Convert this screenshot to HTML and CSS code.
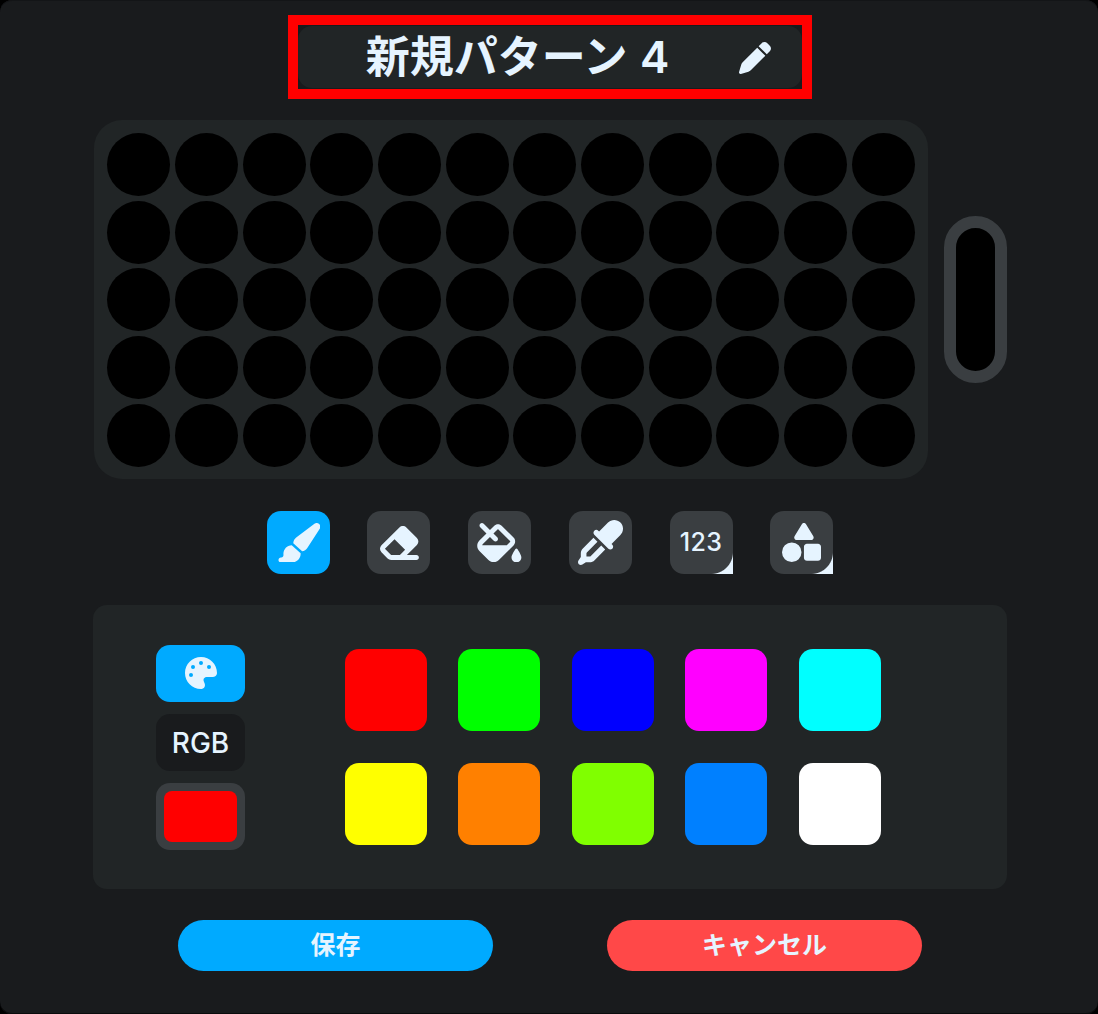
FILE: index.html
```html
<!DOCTYPE html>
<html lang="ja">
<head>
<meta charset="utf-8">
<title>新規パターン 4</title>
<link rel="stylesheet" href="styles.css">
</head>
<body>
<div class="window">
  <div class="title">
    <span class="title-text">新規パターン 4</span>
    <svg class="title-pen" viewBox="0 0 512 512"><path d="M362.7 19.3L314.3 67.7 444.3 197.7l48.4-48.4c25-25 25-65.5 0-90.5L453.3 19.3c-25-25-65.5-25-90.5 0zm-71 71L58.6 323.5c-10.4 10.4-18 23.3-22.2 37.4L1 481.2C-1.5 489.7 .8 498.8 7 505s15.3 8.5 23.7 6.1l120.3-35.4c14.1-4.2 27-11.8 37.4-22.2L421.7 220.3 291.7 90.3z"/></svg>
    <div class="highlight"></div>
  </div>

  <div class="board-row">
    <div class="board">
      <div class="led"></div><div class="led"></div><div class="led"></div><div class="led"></div><div class="led"></div><div class="led"></div><div class="led"></div><div class="led"></div><div class="led"></div><div class="led"></div><div class="led"></div><div class="led"></div>
      <div class="led"></div><div class="led"></div><div class="led"></div><div class="led"></div><div class="led"></div><div class="led"></div><div class="led"></div><div class="led"></div><div class="led"></div><div class="led"></div><div class="led"></div><div class="led"></div>
      <div class="led"></div><div class="led"></div><div class="led"></div><div class="led"></div><div class="led"></div><div class="led"></div><div class="led"></div><div class="led"></div><div class="led"></div><div class="led"></div><div class="led"></div><div class="led"></div>
      <div class="led"></div><div class="led"></div><div class="led"></div><div class="led"></div><div class="led"></div><div class="led"></div><div class="led"></div><div class="led"></div><div class="led"></div><div class="led"></div><div class="led"></div><div class="led"></div>
      <div class="led"></div><div class="led"></div><div class="led"></div><div class="led"></div><div class="led"></div><div class="led"></div><div class="led"></div><div class="led"></div><div class="led"></div><div class="led"></div><div class="led"></div><div class="led"></div>
    </div>
    <div class="side-pill"></div>
  </div>

  <div class="tools">
    <div class="tool tool-active"><svg class="icon" viewBox="0 0 576 512"><path d="M339.3 367.1c27.3-3.9 51.9-19.4 67.2-42.9L568.2 74.1c12.6-19.5 9.4-45.3-7.6-61.2S517.7-4.4 499.1 9.6L262.4 187.2c-24 18-38.2 46.1-38.4 76.1L339.3 367.1zm-19.6 25.4l-116-104.4C143.9 290.3 96 339.6 96 400c0 3.9 .2 7.8 .6 11.6C98.4 429.1 86.4 448 68.8 448H64c-17.7 0-32 14.3-32 32s14.3 32 32 32H208c61.9 0 112-50.1 112-112c0-2.5-.1-5-.2-7.5z"/></svg></div>
    <div class="tool"><svg class="icon" viewBox="0 0 576 512"><path d="M290.7 57.4L57.4 290.7c-25 25-25 65.5 0 90.5l80 80c12 12 28.3 18.7 45.3 18.7H288h9.4H512c17.7 0 32-14.3 32-32s-14.3-32-32-32H387.9L518.6 285.3c25-25 25-65.5 0-90.5L381.3 57.4c-25-25-65.5-25-90.5 0zM297.4 416H288l-105.4 0-80-80L227.3 211.3 364.7 348.7 297.4 416z"/></svg></div>
    <div class="tool"><svg class="icon" viewBox="0 0 576 512"><path d="M41.4 9.4C53.9-3.1 74.1-3.1 86.6 9.4L168 90.7l53.1-53.1c28.1-28.1 73.7-28.1 101.8 0L474.3 189.1c28.1 28.1 28.1 73.7 0 101.8L283.9 481.4c-37.5 37.5-98.3 37.5-135.8 0L30.6 363.9c-37.5-37.5-37.5-98.3 0-135.8L122.7 136 41.4 54.6c-12.5-12.5-12.5-32.8 0-45.3zm176 221.3L168 181.3 75.9 273.4c-4.2 4.2-7 9.3-8.4 14.6H386.7l42.3-42.3c3.1-3.1 3.1-8.2 0-11.3L277.7 82.9c-3.1-3.1-8.2-3.1-11.3 0L213.3 136l49.4 49.4c12.5 12.5 12.5 32.8 0 45.3s-32.8 12.5-45.3 0zM512 512c-35.3 0-64-28.7-64-64c0-25.2 32.6-79.6 51.2-108.7c6-9.4 19.5-9.4 25.5 0C543.4 368.4 576 422.8 576 448c0 35.3-28.7 64-64 64z"/></svg></div>
    <div class="tool"><svg class="icon icon-dropper" viewBox="0 0 512 512"><path d="M341.6 29.2L240.1 130.8l-9.4-9.4c-12.5-12.5-32.8-12.5-45.3 0s-12.5 32.8 0 45.3l160 160c12.5 12.5 32.8 12.5 45.3 0s12.5-32.8 0-45.3l-9.4-9.4L482.8 170.4c39-39 39-102.2 0-141.1s-102.2-39-141.1 0zM55.4 323.3c-15 15-23.4 35.4-23.4 56.6v42.4L5.4 462.2c-8.5 12.7-6.8 29.6 4 40.4s27.7 12.5 40.4 4L89.7 480h42.4c21.2 0 41.6-8.4 56.6-23.4L309.4 335.9l-45.3-45.3L143.4 411.3c-3 3-7.1 4.7-11.3 4.7H96V379.9c0-4.2 1.7-8.3 4.7-11.3L221.4 247.9l-45.3-45.3L55.4 323.3z"/></svg></div>
    <div class="tool tool-corner"><span class="tool-text">123</span></div>
    <div class="tool tool-corner"><svg class="icon icon-shapes" viewBox="0 0 512 512"><path d="M315.4 15.5C309.7 5.9 299.2 0 288 0s-21.7 5.9-27.4 15.5l-96 160c-5.9 9.9-6.1 22.2-.4 32.2s16.3 16.2 27.8 16.2H384c11.5 0 22.2-6.2 27.8-16.2s5.5-22.3-.4-32.2l-96-160zM288 312V456c0 22.1 17.9 40 40 40H472c22.1 0 40-17.9 40-40V312c0-22.1-17.9-40-40-40H328c-22.1 0-40 17.9-40 40zM128 512a128 128 0 1 0 0-256 128 128 0 1 0 0 256z"/></svg></div>
  </div>

  <div class="color-panel">
    <div class="modes">
      <div class="mode mode-active"><svg class="mode-icon" viewBox="0 0 512 512"><path d="M512 256c0 .9 0 1.8 0 2.7c-.4 36.5-33.6 61.3-70.1 61.3H344c-26.5 0-48 21.5-48 48c0 3.4 .4 6.7 1 9.9c2.1 10.2 6.5 20 10.8 29.9c6.1 13.8 12.1 27.5 12.1 42c0 31.8-21.6 60.7-53.4 62c-3.5 .1-7 .2-10.6 .2C114.6 512 0 397.4 0 256S114.6 0 256 0S512 114.6 512 256zM128 288a32 32 0 1 0 -64 0 32 32 0 1 0 64 0zm0-96a32 32 0 1 0 0-64 32 32 0 1 0 0 64zM288 96a32 32 0 1 0 -64 0 32 32 0 1 0 64 0zm96 96a32 32 0 1 0 0-64 32 32 0 1 0 0 64z"/></svg></div>
      <div class="mode mode-rgb">RGB</div>
      <div class="current"><div class="current-fill"></div></div>
    </div>
    <div class="swatches">
      <div class="swatch" style="background:#ff0000"></div>
      <div class="swatch" style="background:#00ff00"></div>
      <div class="swatch" style="background:#0000ff"></div>
      <div class="swatch" style="background:#ff00ff"></div>
      <div class="swatch" style="background:#00ffff"></div>
      <div class="swatch" style="background:#ffff00"></div>
      <div class="swatch" style="background:#ff8000"></div>
      <div class="swatch" style="background:#80ff00"></div>
      <div class="swatch" style="background:#0080ff"></div>
      <div class="swatch" style="background:#ffffff"></div>
    </div>
  </div>

  <div class="actions">
    <div class="action action-save">保存</div>
    <div class="action action-cancel">キャンセル</div>
  </div>
</div>
</body>
</html>
```

FILE: styles.css
```css
* { box-sizing: border-box; }
html, body { margin: 0; padding: 0; background: #000; }
body {
  width: 1098px;
  height: 1014px;
  overflow: hidden;
  font-family: "Inter", "Noto Sans CJK JP", sans-serif;
  color: #e6f4ff;
}
.window {
  width: 1098px;
  height: 1014px;
  padding: 26px 0 0 2px;
  background: #191b1d;
  border-radius: 12px;
  box-shadow: inset 0 1px #131517, inset 0 -1px #0a0b0c;
  display: flex;
  flex-direction: column;
  align-items: center;
}
.title {
  position: relative;
  width: 504px;
  height: 62px;
  flex: none;
  padding-right: 65px;
  background: #212526;
  border-radius: 14px;
  display: flex;
  align-items: center;
  justify-content: center;
}
.title-text {
  font-size: 44px;
  font-weight: 600;
  line-height: 62px;
  word-spacing: 1.5px;
  white-space: nowrap;
}
.title-pen {
  position: absolute;
  right: 31px;
  top: 16px;
  width: 32px;
  height: 32px;
  fill: #e6f4ff;
}
.highlight {
  position: absolute;
  inset: -11px -10px;
  border: 10px solid #ff0000;
}
.board-row {
  display: flex;
  align-items: center;
  gap: 16px;
  margin-top: 32px;
  margin-left: 1px;
  flex: none;
}
.board {
  width: 834px;
  height: 359px;
  padding: 12.9px 13px 12px 13.3px;
  background: #212526;
  border-radius: 28px;
  display: grid;
  grid-template-columns: repeat(12, 63px);
  grid-auto-rows: 63px;
  gap: 4.7px;
}
.led { background: #000; border-radius: 50%; }
.side-pill {
  width: 63px;
  height: 167px;
  background: #000;
  border: 12.5px solid #3a3e41;
  border-radius: 32px;
}
.tools {
  display: flex;
  gap: 37.7px;
  margin-top: 32px;
  flex: none;
}
.tool {
  position: relative;
  width: 63px;
  height: 63px;
  background: #3a3e41;
  border-radius: 14px;
  display: flex;
  align-items: center;
  justify-content: center;
}
.tool-active { background: #00aaff; }
.tool-corner::after {
  content: "";
  position: absolute;
  right: 0;
  bottom: 0;
  width: 22px;
  height: 22px;
  background: radial-gradient(circle at 0 0, transparent 21.5px, #e6f4ff 22.5px);
}
.icon { flex: none; width: 44.4px; height: 39.4px; fill: #e6f4ff; }
.icon-dropper { width: 45px; height: 45px; }
.icon-shapes { width: 39px; height: 39px; }
.tool-text { font-size: 25px; line-height: 1; font-weight: 500; letter-spacing: .3px; }
.color-panel {
  width: 914px;
  height: 284px;
  margin-top: 31px;
  flex: none;
  padding-left: 63px;
  background: #212526;
  border-radius: 14px;
  display: flex;
  align-items: center;
  gap: 100px;
}
.modes { width: 89px; display: flex; flex-direction: column; gap: 12px; }
.mode {
  height: 57px;
  border-radius: 14px;
  display: flex;
  align-items: center;
  justify-content: center;
}
.mode-active { background: #00aaff; }
.mode-rgb {
  padding-top: 2px;
  background: #191b1d;
  font-size: 28px;
  font-weight: 500;
}
.mode-icon { width: 32px; height: 32px; fill: #e6f4ff; }
.current {
  height: 67px;
  padding: 8px;
  background: #3a3e41;
  border-radius: 14px;
}
.current-fill { height: 100%; background: #ff0000; border-radius: 8px; }
.swatches {
  display: grid;
  grid-template-columns: repeat(5, 82px);
  grid-auto-rows: 82px;
  column-gap: 31.4px;
  row-gap: 32px;
}
.swatch { border-radius: 14px; }
.actions {
  display: flex;
  gap: 114px;
  margin-top: 31px;
  flex: none;
}
.action {
  width: 315px;
  height: 51px;
  padding-bottom: 5px;
  border-radius: 26px;
  display: flex;
  align-items: center;
  justify-content: center;
  font-size: 25px;
  font-weight: 700;
}
.action-save { background: #00aaff; }
.action-cancel { background: #ff4848; }
```
